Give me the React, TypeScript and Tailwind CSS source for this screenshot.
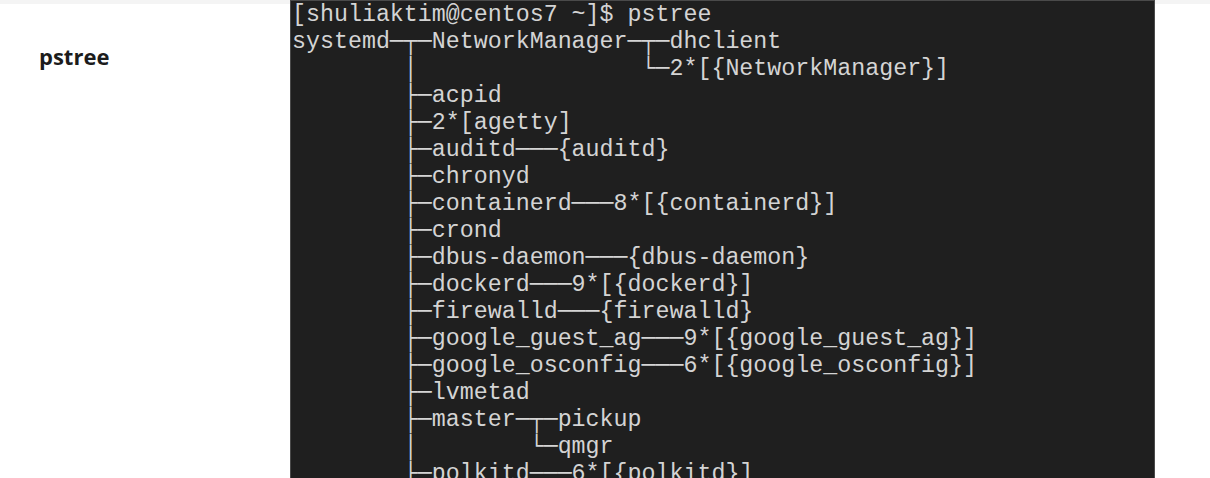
import React from "react";

const lines = [
  "[shuliaktim@centos7 ~]$ pstree",
  "systemd─┬─NetworkManager─┬─dhclient",
  "        │                └─2*[{NetworkManager}]",
  "        ├─acpid",
  "        ├─2*[agetty]",
  "        ├─auditd───{auditd}",
  "        ├─chronyd",
  "        ├─containerd───8*[{containerd}]",
  "        ├─crond",
  "        ├─dbus-daemon───{dbus-daemon}",
  "        ├─dockerd───9*[{dockerd}]",
  "        ├─firewalld───{firewalld}",
  "        ├─google_guest_ag───9*[{google_guest_ag}]",
  "        ├─google_osconfig───6*[{google_osconfig}]",
  "        ├─lvmetad",
  "        ├─master─┬─pickup",
  "        │        └─qmgr",
  "        ├─polkitd───6*[{polkitd}]",
];

export default function App() {
  return (
    <div className="w-[1210px] h-[478px] overflow-hidden bg-white relative">
      <div className="absolute top-0 left-0 w-full h-[4px] bg-[#f4f4f4]" />
      <div className="flex h-full">
        <div className="w-[290px] shrink-0 pl-[39px] pt-[40px]">
          <span
            className="text-[22px] font-bold text-[#1c1c1c]"
            style={{ fontFamily: '"Open Sans", "Noto Sans", sans-serif' }}
          >
            pstree
          </span>
        </div>
        <div className="w-[865px] shrink-0 h-full bg-[#1f1f1f] border-l border-t border-r border-[#4a4a4a] pl-[1px] pt-[1px] overflow-hidden relative z-10">
          <pre
            className="text-[23.3px] leading-[27px] text-[#d4d4d4] m-0"
            style={{ fontFamily: '"Liberation Mono", "DejaVu Sans Mono", monospace' }}
          >
            {lines.join("\n")}
          </pre>
        </div>
      </div>
    </div>
  );
}
